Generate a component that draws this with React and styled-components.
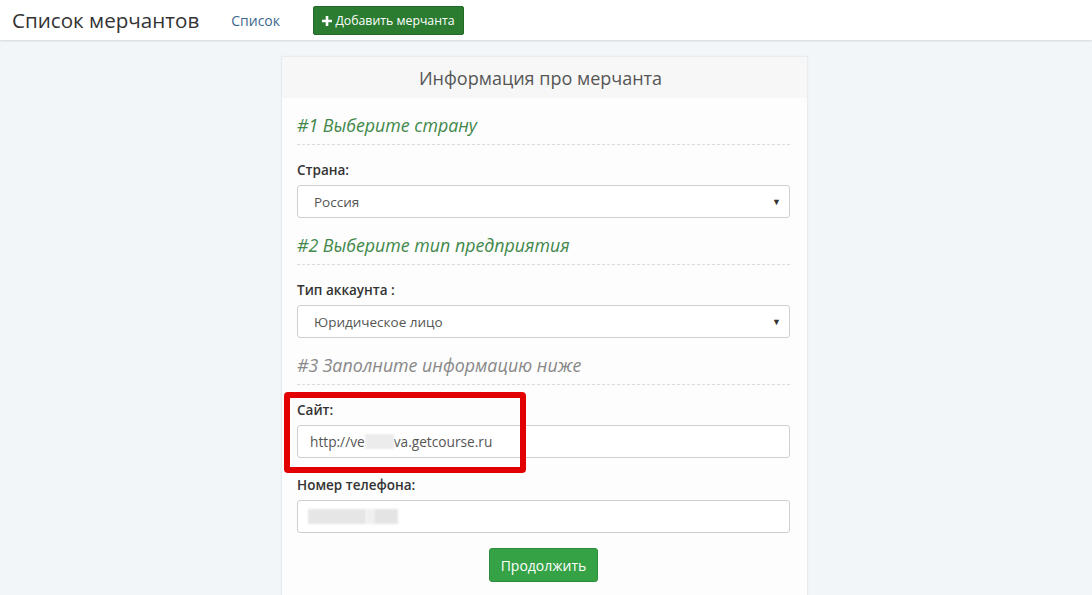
import React from "react";
import styled, { createGlobalStyle } from "styled-components";

const GlobalStyle = createGlobalStyle`
  body {
    margin: 0;
    background: #f2f6f9;
    font-family: "Open Sans", "Liberation Sans", sans-serif;
    color: #333;
  }
`;

const TopBar = styled.header`
  height: 40px;
  background: #fff;
  box-shadow: 0 1px 2px rgba(0, 0, 0, 0.12);
  display: flex;
  align-items: center;
  padding-left: 12px;
`;

const Brand = styled.div`
  font-size: 20.6px;
  color: #333;
  margin-right: 32px;
  line-height: 28px;
`;

const NavLink = styled.a`
  font-size: 14px;
  color: #3b6890;
  text-decoration: none;
  margin-right: 33px;
`;

const AddButton = styled.button`
  height: 29px;
  width: 151px;
  margin-top: 1px;
  background: #2b7c31;
  border: 1px solid #236a28;
  border-radius: 2px;
  color: #fff;
  font-family: "Open Sans", sans-serif;
  font-size: 12.3px;
  display: flex;
  align-items: center;
  justify-content: center;
  gap: 3px;
  padding: 0;
`;

const Main = styled.main`
  padding-top: 16px;
  display: flex;
  justify-content: center;
`;

const Panel = styled.section`
  width: 525px;
  margin-right: 3px;
  background: #fdfdfd;
  border: 1px solid #e6ecf0;
  border-bottom: none;
  box-shadow: 0 0 2px rgba(0, 0, 0, 0.04);
`;

const PanelHead = styled.div`
  height: 41px;
  background: #f7f7f7;
  display: flex;
  align-items: center;
  justify-content: center;
  padding-right: 8px;
  font-size: 18px;
  color: #555;
`;

const PanelBody = styled.div`
  padding: 15px 17px 20px 15px;
  display: flex;
  flex-direction: column;
`;

const StepTitle = styled.h3`
  margin: ${({ $first }) => ($first ? "0" : "15px")} 0 0;
  font-size: 17.8px;
  font-weight: 400;
  font-style: italic;
  line-height: 25px;
  color: ${({ $muted }) => ($muted ? "#888" : "#42884a")};
  padding-bottom: 6px;
  border-bottom: 1px dashed #dcdcdc;
`;

const Group = styled.div`
  position: relative;
  margin-top: ${({ $gap }) => $gap || 16}px;
`;

const Label = styled.div`
  font-size: 13.5px;
  font-weight: 600;
  line-height: 18px;
  color: #333;
  margin-bottom: 6px;
`;

const SelectBox = styled.div`
  height: 31px;
  border: 1px solid #cfcfcf;
  border-radius: 3px;
  background: #fff;
  display: flex;
  align-items: center;
  justify-content: space-between;
  padding: 0 8px 0 16px;
  font-size: 13.5px;
  color: #555;
`;

const Caret = styled.span`
  font-size: 9px;
  color: #333;
`;

const InputBox = styled.div`
  height: 31px;
  border: 1px solid #cfcfcf;
  border-radius: 3px;
  background: #fff;
  display: flex;
  align-items: center;
  padding: 0 12px;
  font-size: 13.7px;
  color: #555;
`;

const Blur = styled.span`
  display: inline-block;
  width: ${({ $w }) => $w}px;
  height: 15px;
  background: ${({ $bg }) => $bg || "#ececec"};
  filter: blur(1px);
`;

const Highlight = styled.div`
  position: absolute;
  left: -13px;
  top: -9px;
  width: 230px;
  height: 69px;
  border: 6px solid #e30000;
  border-radius: 4px;
  pointer-events: none;
`;

const Actions = styled.div`
  display: flex;
  justify-content: center;
  margin-top: 15px;
`;

const SubmitButton = styled.button`
  height: 34px;
  padding: 0 11px;
  background: #35a246;
  border: 1px solid #2c8c3b;
  border-radius: 3px;
  color: #fff;
  font-family: "Open Sans", sans-serif;
  font-size: 14px;
`;

const PlusIcon = () => (
  <svg width="10" height="10" viewBox="0 0 10 10">
    <path d="M3.7 0h2.6v3.7H10v2.6H6.3V10H3.7V6.3H0V3.7h3.7z" fill="#fff" />
  </svg>
);

export default function App() {
  return (
    <>
      <GlobalStyle />
      <TopBar>
        <Brand>Список мерчантов</Brand>
        <NavLink href="#">Список</NavLink>
        <AddButton>
          <PlusIcon />
          Добавить мерчанта
        </AddButton>
      </TopBar>
      <Main>
        <Panel>
          <PanelHead>Информация про мерчанта</PanelHead>
          <PanelBody>
            <StepTitle $first>#1 Выберите страну</StepTitle>
            <Group>
              <Label>Страна:</Label>
              <SelectBox>
                Россия
                <Caret>▼</Caret>
              </SelectBox>
            </Group>

            <StepTitle>#2 Выберите тип предприятия</StepTitle>
            <Group>
              <Label>Тип аккаунта :</Label>
              <SelectBox>
                Юридическое лицо
                <Caret>▼</Caret>
              </SelectBox>
            </Group>

            <StepTitle $muted>#3 Заполните информацию ниже</StepTitle>
            <Group>
              <Label>Сайт:</Label>
              <InputBox>
                http://ve
                <Blur $w={29} />
                va.getcourse.ru
              </InputBox>
              <Highlight />
            </Group>
            <Group $gap={18}>
              <Label>Номер телефона:</Label>
              <InputBox style={{ paddingLeft: 10 }}>
                <Blur $w={58} $bg="#e6e6e6" />
                <Blur $w={8} $bg="#f0f0f0" />
                <Blur $w={24} $bg="#e4e4e4" />
              </InputBox>
            </Group>
            <Actions>
              <SubmitButton>Продолжить</SubmitButton>
            </Actions>
          </PanelBody>
        </Panel>
      </Main>
    </>
  );
}
